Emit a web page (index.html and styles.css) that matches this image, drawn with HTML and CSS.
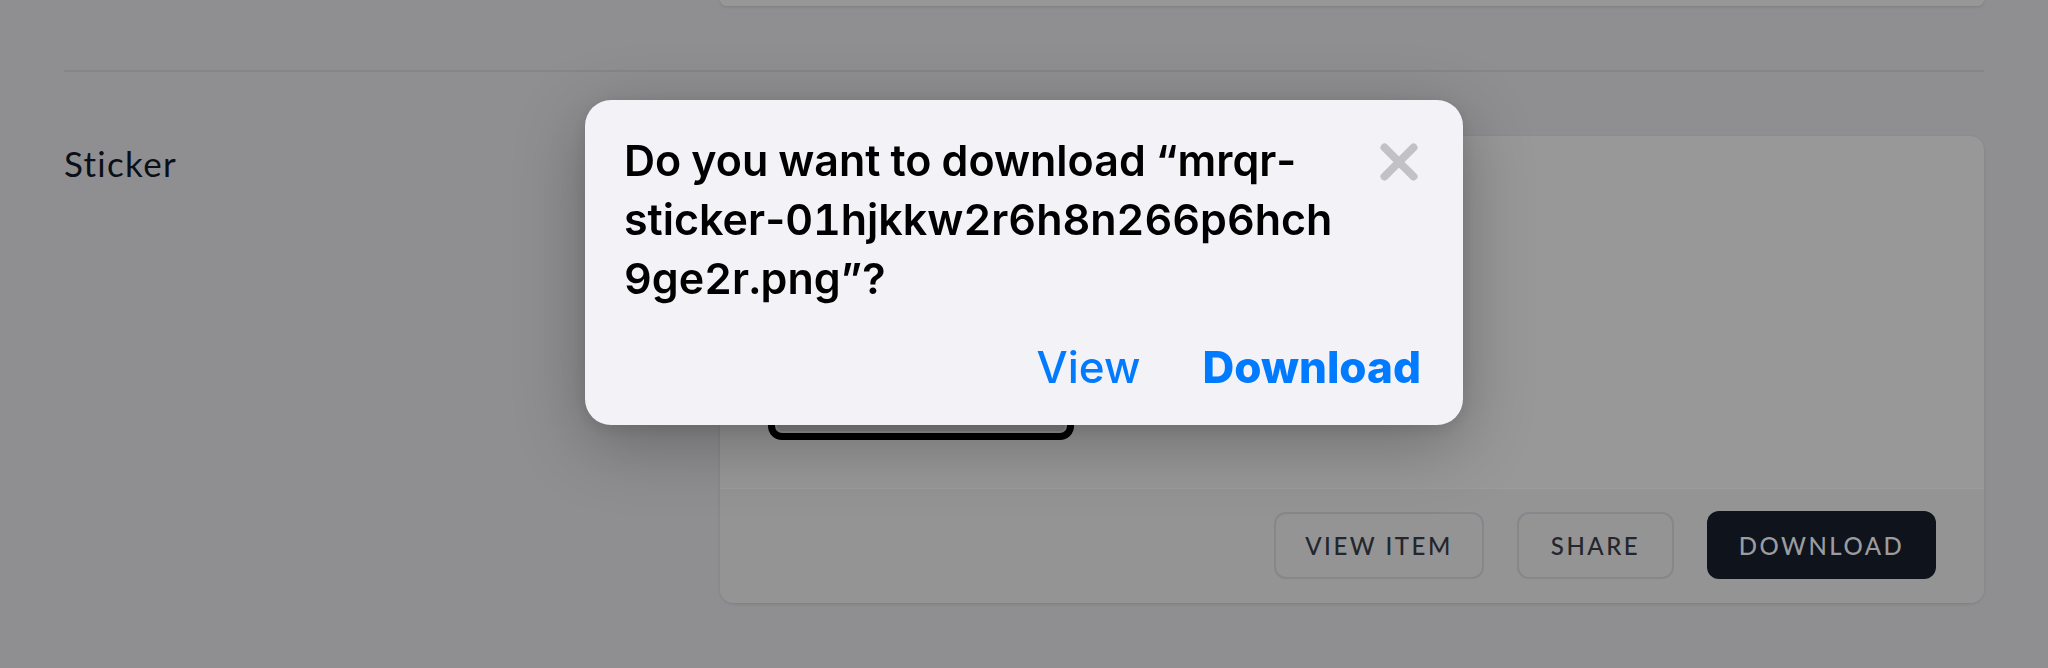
FILE: index.html
```html
<!DOCTYPE html>
<html lang="en">
<head>
<meta charset="utf-8">
<title>Sticker download</title>
<link rel="stylesheet" href="styles.css">
</head>
<body>
<div class="page">
  <div class="row row-top">
    <div class="label-col"></div>
    <div class="card-tail"></div>
  </div>
  <div class="divider"></div>
  <div class="row row-sticker">
    <div class="label-col"><div class="label">Sticker</div></div>
    <div class="card">
      <div class="card-body">
        <div class="sticker-box"></div>
      </div>
      <div class="card-footer">
        <button class="btn btn-outline btn-view">VIEW ITEM</button>
        <button class="btn btn-outline btn-share">SHARE</button>
        <button class="btn btn-dark">DOWNLOAD</button>
      </div>
    </div>
  </div>
</div>

<div class="modal" role="dialog">
  <div class="modal-head">
    <div class="modal-title">Do you want to download “mrqr<span class="hy">-</span><br>sticker<span class="hy">-</span>01hjkkw2r6h8n266p6hch<br>9ge2r.png”?</div>
    <svg class="close" width="38" height="38" viewBox="0 0 38 38" aria-hidden="true">
      <path d="M4.5 4.5 L33.5 33.5 M33.5 4.5 L4.5 33.5" stroke="#c1c1c6" stroke-width="8" stroke-linecap="round" fill="none"/>
    </svg>
  </div>
  <div class="modal-actions">
    <span class="act act-view">View</span>
    <span class="act act-download">Download</span>
  </div>
</div>
</body>
</html>
```
FILE: styles.css
```css
* { box-sizing: border-box; }
html, body { margin: 0; padding: 0; }
body {
  background: #8f8f91;
  width: 2048px;
  height: 668px;
  overflow: hidden;
  font-family: Lato, "Liberation Sans", sans-serif;
}
.page {
  padding: 0 64px;
}
.row {
  display: grid;
  grid-template-columns: 656px 1fr;
}
.card-tail {
  height: 6px;
  background: #979798;
  border-radius: 0 0 12px 12px;
  box-shadow: 0 1px 3px rgba(0,0,0,0.12);
}
.divider {
  margin-top: 64px;
  height: 2px;
  background: #868688;
}
.row-sticker {
  padding-top: 64px;
}
.label {
  margin-top: 10px;
  font-size: 35px;
  line-height: 34px;
  letter-spacing: 1.3px;
  color: #0b0f17;
}
.card {
  background: #989898;
  border-radius: 14px;
  box-shadow: 0 1px 3px rgba(0,0,0,0.12);
  overflow: hidden;
}
.card-body {
  height: 352px;
  padding: 0 48px 48px;
  display: flex;
  align-items: flex-end;
}
.sticker-box {
  width: 306px;
  height: 200px;
  border: 7px solid #000;
  border-radius: 14px;
  background: #868686;
  box-shadow: inset 0 0 0 2px #959595;
}
.card-footer {
  height: 115px;
  border-top: 1px solid #9c9c9c;
  background: #949495;
  display: flex;
  justify-content: flex-end;
  align-items: center;
  gap: 33px;
  padding-right: 48px;
  padding-bottom: 2px;
}
.btn {
  height: 67px;
  border-radius: 12px;
  font-family: Lato, "Liberation Sans", sans-serif;
  font-size: 24px;
  font-weight: 500;
  letter-spacing: 2.5px;
  padding: 0;
  cursor: pointer;
}
.btn-outline {
  background: transparent;
  border: 2px solid #86878b;
  color: #23262d;
}
.btn-view { width: 210px; }
.btn-share { width: 157px; }
.btn-dark {
  width: 229px;
  height: 68px;
  background: #0f131b;
  border: none;
  color: #9b9c9f;
}

.modal {
  position: fixed;
  left: 585px;
  top: 100px;
  width: 878px;
  background: #f2f2f7;
  border-radius: 26px;
  padding: 31px 45px 32px 39px;
  box-shadow: 0 18px 70px rgba(0,0,0,0.28), 0 4px 16px rgba(0,0,0,0.10);
  font-family: Inter, "Liberation Sans", sans-serif;
}
.modal-head {
  display: flex;
  justify-content: space-between;
  align-items: flex-start;
}
.modal-title {
  font-size: 43px;
  line-height: 59px;
  font-weight: 600;
  color: #000;
  letter-spacing: 0;
  word-spacing: -1.5px;
  font-variant-numeric: tabular-nums;
}
.hy {
  font-variant-numeric: normal;
}
.close {
  margin-top: 12px;
  flex: none;
}
.modal-actions {
  margin-top: 33px;
  display: flex;
  justify-content: flex-end;
  gap: 62px;
  font-size: 44px;
  line-height: 52px;
  color: #007aff;
}
.act-view { font-weight: 500; }
.act-download { font-weight: 800; margin-right: -3px; }
```
